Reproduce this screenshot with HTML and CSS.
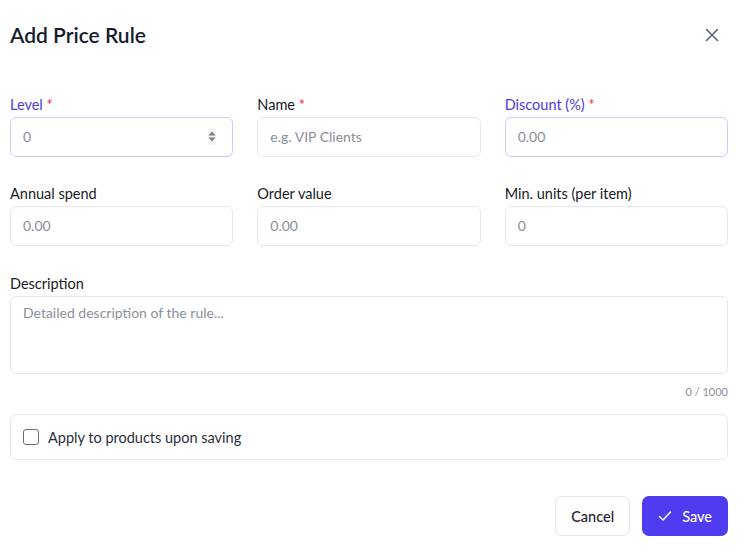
FILE: index.html
```html
<!DOCTYPE html>
<html lang="en">
<head>
  <meta charset="UTF-8" />
  <meta name="viewport" content="width=device-width, initial-scale=1.0"/>
  <title>Add Price Rule</title>
  <link rel="stylesheet" href="styles.css">
</head>
<body>

  <div class="modal">
    <header class="modal-head">
      <h1>Add Price Rule</h1>
      <button class="close" aria-label="Close">
        <svg width="16" height="16" viewBox="0 0 16 16"><path d="M2.5 2.5l11 11M13.5 2.5l-11 11" stroke="currentColor" stroke-width="1.6" stroke-linecap="round"/></svg>
      </button>
    </header>

    <form class="rule-form">
      <div class="grid">
        <label class="field active">
          <span class="label">Level <em>*</em></span>
          <span class="input number">
            <span class="value">0</span>
            <span class="spin">
              <svg width="8" height="13" viewBox="0 0 8 13"><path d="M4 1.5L7.5 5.5H0.5z M4 11.5L0.5 7.5H7.5z" fill="#7a7f88"/></svg>
            </span>
          </span>
        </label>

        <label class="field">
          <span class="label">Name <em>*</em></span>
          <span class="input"><span class="placeholder">e.g. VIP Clients</span></span>
        </label>

        <label class="field active">
          <span class="label">Discount (%) <em>*</em></span>
          <span class="input"><span class="placeholder">0.00</span></span>
        </label>

        <label class="field">
          <span class="label">Annual spend</span>
          <span class="input"><span class="placeholder">0.00</span></span>
        </label>

        <label class="field">
          <span class="label">Order value</span>
          <span class="input"><span class="placeholder">0.00</span></span>
        </label>

        <label class="field">
          <span class="label">Min. units (per item)</span>
          <span class="input"><span class="placeholder">0</span></span>
        </label>
      </div>

      <label class="field wide">
        <span class="label">Description</span>
        <span class="textarea"><span class="placeholder">Detailed description of the rule...</span></span>
      </label>
      <p class="counter">0 / 1000</p>

      <label class="check-card">
        <span class="box"></span>
        <span>Apply to products upon saving</span>
      </label>

      <footer class="actions">
        <button type="button" class="btn cancel">Cancel</button>
        <button type="button" class="btn save">
          <svg width="14" height="14" viewBox="0 0 14 14"><path d="M1.5 7.5l3.5 3.5 7.5-8" fill="none" stroke="currentColor" stroke-width="1.5" stroke-linecap="round" stroke-linejoin="round"/></svg>
          Save
        </button>
      </footer>
    </form>
  </div>

</body>
</html>
```

FILE: styles.css
```css
* {
  box-sizing: border-box;
  margin: 0;
  padding: 0;
}

body {
  font-family: Lato, 'Noto Sans', sans-serif;
  background-color: #fff;
  color: #1f2430;
  width: 745px;
  height: 553px;
}

.modal {
  padding: 0 17px 0 10px;
}

.modal-head {
  display: flex;
  align-items: center;
  justify-content: space-between;
  height: 72px;
  padding-bottom: 3px;
}

.modal-head h1 {
  font-size: 21px;
  font-weight: 600;
  color: #161c2d;
}

.close {
  border: none;
  background: none;
  color: #5b6577;
  display: flex;
  margin-right: 8px;
}

.grid {
  display: grid;
  grid-template-columns: repeat(3, 1fr);
  column-gap: 24px;
  row-gap: 26px;
  margin-top: 22px;
}

.field {
  display: flex;
  flex-direction: column;
}

.label {
  font-size: 14.5px;
  font-weight: 400;
  height: 23px;
  padding-top: 2px;
  color: #151a25;
}

.wide .label {
  height: 21px;
  padding-top: 0;
}

.label em {
  font-style: normal;
  color: #ef2b3b;
}

.field.active .label {
  color: #4a3ddb;
}

.input,
.textarea {
  display: flex;
  align-items: center;
  height: 40px;
  border: 1px solid #e5e8ee;
  border-radius: 6px;
  padding: 0 12px 1px;
  font-size: 14px;
}

.field.active .input {
  border-color: #c9cdfb;
}

.placeholder,
.value {
  color: #8a8f99;
}

.number {
  justify-content: space-between;
  padding-right: 16px;
}

.spin {
  display: flex;
  background: #f5f5f6;
  padding: 2px 0;
}

.wide {
  margin-top: 29px;
}

.textarea {
  height: 78px;
  align-items: flex-start;
  padding-top: 7px;
}

.counter {
  text-align: right;
  font-size: 11px;
  color: #8a909b;
  margin-top: 11px;
}

.check-card {
  display: flex;
  align-items: center;
  gap: 9px;
  height: 46px;
  border: 1px solid #e5e8ee;
  border-radius: 6px;
  padding: 0 12px;
  margin-top: 16px;
  font-size: 14.5px;
  color: #2a303c;
}

.box {
  width: 16px;
  height: 16px;
  border: 1.5px solid #6b707a;
  border-radius: 3px;
}

.actions {
  display: flex;
  justify-content: flex-end;
  gap: 12px;
  margin-top: 36px;
}

.btn {
  height: 40px;
  border-radius: 7px;
  font-family: inherit;
  font-size: 14.5px;
  font-weight: 500;
  display: flex;
  align-items: center;
  gap: 10px;
}

.cancel {
  background: #fff;
  border: 1px solid #e2e5eb;
  color: #1f2430;
  padding: 0 15px;
}

.save {
  background: #4f3cf0;
  border: none;
  color: #fff;
  padding: 0 16px;
}
```
